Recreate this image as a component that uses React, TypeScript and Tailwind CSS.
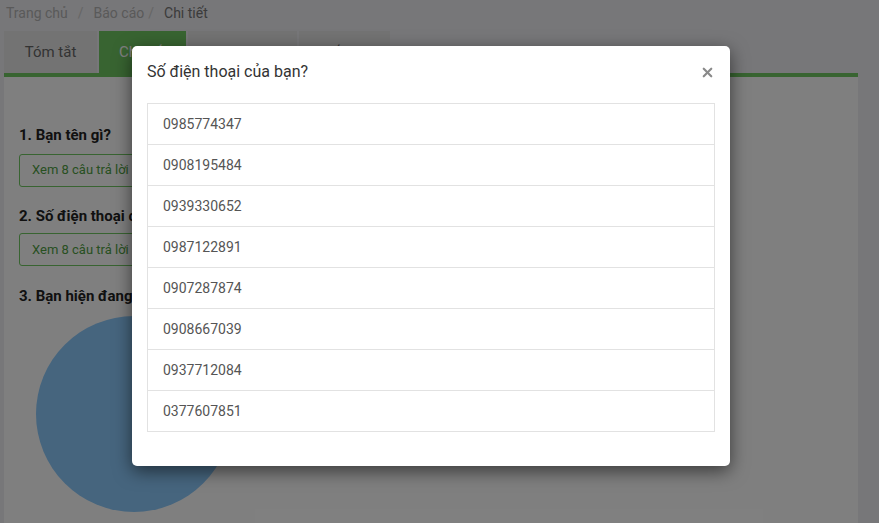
import { X } from "lucide-react";

const PHONES = [
  "0985774347",
  "0908195484",
  "0939330652",
  "0987122891",
  "0907287874",
  "0908667039",
  "0937712084",
  "0377607851",
];

const TABS = ["Tóm tắt", "Chi tiết", "Từng người", "Thống kê"];

export default function App() {
  return (
    <div
      className="relative h-[523px] w-[879px] overflow-hidden bg-[#eeeef2] text-[#333]"
      style={{ fontFamily: "Roboto, 'Liberation Sans', sans-serif" }}
    >
      {/* breadcrumb */}
      <div className="flex h-[27px] items-center pl-[6px] text-[14px] text-[#b4b4b4]">
        <span>Trang chủ</span>
        <span className="px-[10px] text-[#ccc]">/</span>
        <span>Báo cáo</span>
        <span className="pl-[4px] pr-[10px] text-[#ccc]">/</span>
        <span className="text-[#777]">Chi tiết</span>
      </div>

      <div className="mx-[4px] mt-[4px] w-[854px]">
        {/* tabs */}
        <div className="flex h-[42px] gap-[2px]">
          {TABS.map((t, i) => (
            <div
              key={t}
              className={`flex items-center justify-center text-[15px] ${
                i === 1 ? "bg-[#70c962] text-white" : "bg-[#e6e6e6] text-[#666]"
              } ${i === 0 ? "w-[93px]" : i === 1 ? "w-[87px]" : i === 2 ? "w-[109px]" : "w-[91px]"}`}
            >
              {t}
            </div>
          ))}
        </div>
        <div className="h-[4px] bg-[#70c962]" />

        {/* panel */}
        <div className="h-[460px] bg-white px-[15px] pt-[47px]">
          <div className="text-[15px] font-bold text-[#222]">1. Bạn tên gì?</div>
          <button className="mt-[7px] h-[33px] w-[180px] rounded-[3px] border border-[#70c962] px-[12px] text-left text-[13px] text-[#4fa043]">
            Xem 8 câu trả lời
          </button>

          <div className="mt-[18px] text-[15px] font-bold text-[#222]">2. Số điện thoại của bạn?</div>
          <button className="mt-[6px] h-[33px] w-[180px] rounded-[3px] border border-[#70c962] px-[12px] text-left text-[13px] text-[#4fa043]">
            Xem 8 câu trả lời
          </button>

          <div className="mt-[19px] text-[15px] font-bold text-[#222]">3. Bạn hiện đang làm gì?</div>
          <div className="ml-[17px] mt-[8px] h-[196px] w-[196px] rounded-full bg-[#8ccafc]" />
        </div>
      </div>

      {/* overlay */}
      <div className="absolute inset-0 bg-black/50" />

      {/* modal */}
      <div className="absolute left-[132px] top-[46px] w-[598px] rounded-[5px] bg-white shadow-[0_5px_18px_rgba(0,0,0,0.55)]">
        <div className="flex h-[57px] items-start justify-between px-[15px] pt-[15px]">
          <h4 className="text-[16px] leading-[22px] text-[#333]">Số điện thoại của bạn?</h4>
          <X className="mt-[4px] h-[15px] w-[15px] text-[#8a8a8a]" strokeWidth={3.5} />
        </div>
        <div className="px-[15px] pb-[34px]">
          <ul className="border border-[#e2e2e2]">
            {PHONES.map((p, i) => (
              <li
                key={p}
                className={`flex items-center px-[15px] text-[14px] text-[#555] ${
                  i > 0 ? "h-[41px] border-t border-[#e2e2e2]" : "h-[40px]"
                }`}
              >
                {p}
              </li>
            ))}
          </ul>
        </div>
      </div>
    </div>
  );
}
